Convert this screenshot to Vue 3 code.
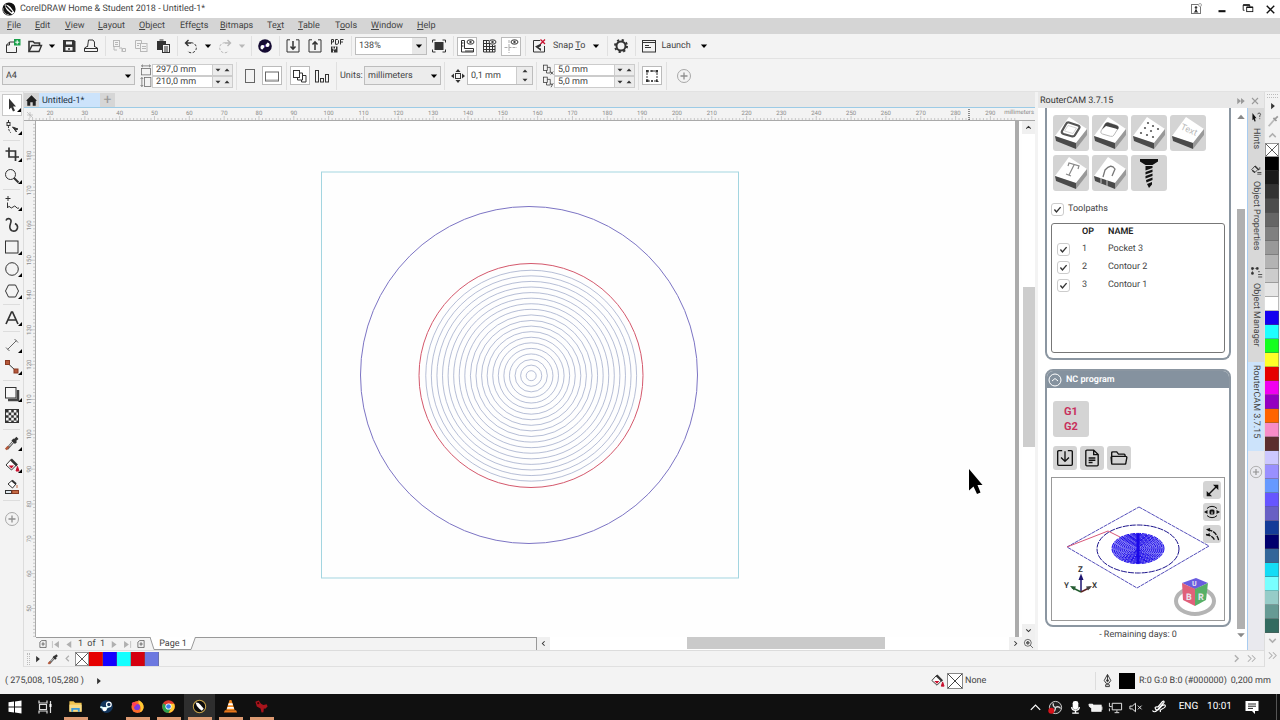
<script setup>
import { h, ref } from 'vue'

const glyphs = {
  corel: '<circle cx="8" cy="8" r="6.600" fill="#111" stroke="none"/><path d="M3.500 3.500 Q7 3 9.500 6 L13.500 11.500 L11 13.600 L7.800 10.800 Q4.500 8.500 3.500 3.500 Z" fill="#fff" stroke="none"/><path d="M4.600 4.500 L11 11" stroke="#111" stroke-width="1.500"/><path d="M2 7 A6 6 0 0 0 8 13.800" stroke="#999"/>',
  user: '<rect x="3.500" y="3.500" width="9" height="9" stroke="#777"/><circle cx="8" cy="6.500" r="1.300" fill="#333" stroke="none"/><path d="M5.500 11.500 H10.500 L9 10 V8.500 H7 V10 Z" fill="#333" stroke="none"/><circle cx="12" cy="4" r="1.500" fill="#fff" stroke="#aaa"/>',
  min: '<path d="M4 10.500 H12" stroke-width="2.400"/>',
  restore: '<rect x="6.500" y="6" width="7" height="5"/><path d="M4 9.500 H2.500 V3.500 H10 V5.500"/><path d="M6.500 6 H13.500 M2.500 3.500 H10" stroke-width="1.800"/>',
  close: '<path d="M4 4 L12 12 M12 4 L4 12" stroke-width="1.500"/>',
  newdoc: '<path d="M4.500 4 H9 M11.500 9 V14.500 H1.500 V7 L4.500 4 M4.500 4 V7 H1.500"/><rect x="9" y="1" width="6.500" height="6.500" fill="#19a04a" stroke="none"/><path d="M12.200 2.200 V6.300 M10.200 4.200 H14.300" stroke="#fff"/>',
  open: '<path d="M2 13.500 V3.500 H6 L7.500 5 H12.500 V7.500" stroke-width="1.600"/><path d="M2 13.500 L5 7.500 H14.500 L12 13.500 Z" stroke-width="1.400"/>',
  save: '<path d="M2 2 H13 L14.500 3.500 V14 H2 Z" fill="currentColor" stroke="none"/><rect x="5" y="3.500" width="6" height="3" fill="#f3f3f3" stroke="none"/><rect x="4.500" y="9" width="7" height="3.500" fill="#f3f3f3" stroke="none"/><path d="M8 10 V12" stroke-width="1.500"/>',
  print: '<path d="M4.500 9 L5.500 2 H10 L11.500 4 V9"/><path d="M1.500 13.500 V10 L4 8.500 M11.500 8.500 L14.500 10 V13.500 H1.500 M2 10.500 H14"/>',
  cut: '<rect x="2.500" y="2.500" width="6" height="6"/><path d="M4 4.500 H7 M4 6.500 H7 M8 10 H11 V14 M11.500 10.500 h3 v3 h-3z M3 9 V12 H6"/>',
  copy: '<path d="M7 10.500 H2.500 V2.500 H8.500 V5"/><rect x="7.500" y="5.500" width="6.500" height="8"/><path d="M4 5.500 H7 M4 7.500 H6 M9 8.500 H13 M9 10.500 H13"/>',
  paste: '<path d="M2 3 H11 V6 H7 V12 H2 Z" fill="currentColor" stroke="none"/><path d="M4.500 2 H8.500"/><rect x="7.500" y="6.500" width="7" height="8" fill="#f3f3f3"/><path d="M9 9 H13 M9 11 H13 M9 13 H13"/>',
  undo: '<path d="M5.500 2 L2.500 5 L5.500 8 M2.500 5 H8" stroke-width="1.400"/><path d="M8 4.800 A5 5 0 1 1 4.500 13" stroke-dasharray="2.500 1.500"/>',
  redo: '<path d="M10.500 2 L13.500 5 L10.500 8 M13.500 5 H8" stroke-width="1.400"/><path d="M8 4.800 A5 5 0 1 0 11.500 13" stroke-dasharray="2.500 1.500"/>',
  search: '<circle cx="8" cy="8" r="6.800" fill="#150b33" stroke="none"/><path d="M8 7 A2.300 2.300 0 1 0 10.500 4.500 L9 6.500 Z M8 9 A2.300 2.300 0 1 0 5.500 11.500 L7 9.500 Z" fill="#fff" stroke="none"/><circle cx="8" cy="8" r="1" fill="#5a35a8" stroke="none"/>',
  import: '<path d="M5 1.800 H2 V14 H14 V1.800 H11"/><path d="M8 3 V11 M5.500 8.500 L8 11.200 L10.500 8.500" stroke-width="1.500"/>',
  export: '<path d="M5 1.800 H2 V14 H14 V1.800 H11"/><path d="M8 12 V4 M5.500 6.500 L8 3.800 L10.500 6.500" stroke-width="1.500"/>',
  pdf: '<path d="M2.500 6.500 V1.500 H4.500 V4 H2.500 M6.500 1.500 V6.300 H8.500 L9.500 5 V2.500 L8.500 1.500 Z M11.500 6.500 V1.500 H14.500 M11.500 4 H14"/><path d="M2 8.500 H8.500 V14.500 H2 Z" fill="currentColor" stroke="none"/><path d="M4 8.500 V11 H6.500 V8.500 M4.500 14.500 V12.500" stroke="#f3f3f3"/>',
  full: '<rect x="3.500" y="4" width="9" height="8" fill="currentColor" stroke="none"/><path d="M1.500 4.500 V2 H4.500 M11.500 2 H14.500 V4.500 M14.500 11.500 V14 H11.500 M4.500 14 H1.500 V11.500"/>',
  rulers: '<path d="M2.500 2.500 H5.500 V10.500 H14.500 V14 H2.500 Z M3 5 H4.500 M3 8 H4.500 M7 12 V14 M9 12 V14 M11 12 V14 M13 12 V14"/><ellipse cx="11.500" cy="4" rx="3.500" ry="2.200"/><circle cx="11.500" cy="4" r=".8" fill="currentColor"/>',
  gridi: '<path d="M2.500 2.500 H8 M2.500 5.500 H8 M2.500 8.500 H14 M2.500 11.500 H14 M2.500 14 H14 M2.500 2 V14 M5.500 2 V14 M8.500 5 V14 M11.500 7 V14 M14 7 V14"/><ellipse cx="11.500" cy="4" rx="3.500" ry="2.200"/><circle cx="11.500" cy="4" r=".8" fill="currentColor"/>',
  guides: '<path d="M6 2 V15 M1.500 9.500 H14" stroke="#aaa" stroke-dasharray="3 1"/><ellipse cx="11.500" cy="4" rx="3.500" ry="2.200"/><circle cx="11.500" cy="4" r=".8" fill="currentColor"/>',
  snapoff: '<path d="M9 2.500 H2.500 V14 H13.500 V8"/><path d="M4 8.500 L10 5.500 V8 L7.500 9.500 L10 10.500 V13 Z" fill="currentColor" stroke="none"/><path d="M9.500 1.500 L14 6 M14 1.500 L9.500 6" stroke="#c8102e" stroke-width="1.300"/>',
  gear: '<circle cx="8" cy="8" r="4.500" stroke-width="2"/><circle cx="8" cy="8" r="6" stroke-width="2" stroke-dasharray="2.200 2.510"/>',
  launch: '<rect x="1.500" y="2.500" width="13" height="11.500"/><path d="M2 4.500 H14" /><path d="M4 7.500 H8 M4 9.500 H10"/>',
  portrait: '<rect x="3.500" y="1.500" width="9" height="13" stroke="#666"/>',
  landscape: '<rect x="1.500" y="4" width="13" height="9" stroke="#666"/><path d="M2 12 H14" stroke="#aaa"/>',
  pages: '<rect x="1.500" y="2.500" width="6" height="7"/><path d="M7.500 5 H10.500 V12 H5.500 V9.500"/><path d="M10.500 7.500 H14 V14 H9.500 V12"/>',
  bars: '<rect x="1.500" y="2.500" width="3" height="11.500"/><rect x="6.500" y="10.500" width="3" height="3.500"/><rect x="11.500" y="6.500" width="3" height="7.500"/>',
  nudge: '<rect x="5.500" y="5.500" width="5" height="5"/><path d="M8 1 L10.500 4 H5.500 Z M8 15 L10.500 12 H5.500 Z M1 8 L4 5.500 V10.500 Z M15 8 L12 5.500 V10.500 Z" fill="currentColor" stroke="none"/>',
  bbox: '<rect x="3" y="3" width="10" height="10" stroke-dasharray="2 1"/><path d="M2 2h2.500v2.500H2z M11.500 2H14v2.500h-2.500z M2 11.500h2.500V14H2z M12 11 L15 14 H12 Z M7 2.300h2v1.500H7z M7 12.300h2v1.500H7z" fill="currentColor" stroke="none"/>',
  plus: '<circle cx="8" cy="8" r="6.500" stroke="#a8a8a8"/><path d="M8 4.500 V11.500 M4.500 8 H11.500" stroke="#909090" stroke-width="1.300"/>',
  pageW: '<rect x="2" y="6" width="12" height="8.500" stroke="#666"/><path d="M2 2.500 H14 M4 .8 L2 2.500 L4 4.200 M12 .8 L14 2.500 L12 4.200" stroke="#666"/>',
  pageH: '<rect x="6" y="2" width="8.500" height="12" stroke="#666"/><path d="M2.500 2 V14 M.8 4 L2.500 2 L4.200 4 M.8 12 L2.500 14 L4.200 12" stroke="#666"/>',
  dup: '<rect x="2" y="1.500" width="5" height="7"/><path d="M7 4.500 H11 V12 H6 V8.500"/><path d="M11.500 10 L15 14 M15 10 L11.500 14"/>',
  dupY: '<rect x="2" y="1.500" width="5" height="7"/><path d="M7 4.500 H11 V12 H6 V8.500"/><path d="M11.500 9.500 L13.200 12 M15 9.500 L12 15"/>',
  home: '<path d="M8 1.500 L1.500 8 L2.800 9 V14.500 H6.500 V10 H9.500 V14.500 H13.200 V9 L14.500 8 Z" fill="#222" stroke="none"/>',
  pick: '<path d="M5 1.500 L12 9.500 H9 L11 13.500 L9 14.500 L7.200 10.500 L5 12.500 Z" fill="currentColor" stroke="none"/>',
  shape: '<path d="M4.500 1 V4 M4.500 6.500 Q4 11 7 14" stroke-dasharray="2.500 1"/><rect x="3" y="3.500" width="3" height="3" fill="#f3f3f3"/><path d="M8.500 8 L14 10 L11.500 11 L12.500 13 Z" fill="currentColor"/>',
  crop: '<path d="M5 1.500 V11 H15 M1.500 5 H11.500 V15 M1.500 5 H11" stroke-width="1.700"/>',
  zoomt: '<circle cx="6.500" cy="6.500" r="5"/><path d="M10 10 L14.500 14.500" stroke-width="2"/>',
  freehand: '<path d="M4 1 V6 M1.500 3.500 H6.500" /><path d="M3.500 7.500 V13 Q5 10 6 12 T9 12 T12 12 T15 13"/>',
  artistic: '<path d="M2 3.500 Q3 1 5.500 1.800 Q8 3 6.500 6.500 Q4.500 12 8 13.800 Q12.500 15 13.500 11 Q14 8 11 6.500" stroke-width="1.600"/>',
  rect: '<rect x="1.500" y="2" width="12.500" height="12"/>',
  ellipse: '<circle cx="8" cy="8" r="6.300"/>',
  polygon: '<path d="M4.500 2 H11.500 L14.500 8 L11.500 14 H4.500 L1.500 8 Z"/>',
  text: '<path d="M2 14 L7.500 2 H8.500 L14 14 M4.200 10 H11.800" stroke-width="1.700"/>',
  line: '<path d="M3.500 12.500 L12.500 3.500 M2 10.500 L5.500 14 M10.500 2 L14 5.500" stroke="#666"/>',
  connector: '<path d="M3.500 4 L12 12"/><rect x="1.500" y="1.500" width="4" height="4" fill="#b5583a" stroke="#8a3a22"/><rect x="10" y="10" width="4" height="4" fill="#b5583a" stroke="#8a3a22"/>',
  shadow: '<path d="M14 4 V14 H4" stroke="#444" stroke-width="2.500"/><rect x="1.500" y="1.500" width="10.500" height="10.500" fill="#f8f8f8"/>',
  checker: '<rect x="1.500" y="1.500" width="13" height="13"/><path d="M2 2h2.600v2.600H2z M7.200 2h2.600v2.600H7.200z M12.400 2H15v2.600h-2.600z M4.600 4.600h2.600v2.600H4.600z M9.800 4.600h2.600v2.600H9.800z M2 7.200h2.600v2.600H2z M7.200 7.200h2.600v2.600H7.200z M12.400 7.200h2.600v2.600h-2.600z M4.600 9.800h2.600v2.600H4.600z M9.800 9.800h2.600v2.600H9.800z M2 12.400h2.600V15H2z M7.200 12.400h2.600V15H7.200z M12.400 12.400H15V15h-2.600z" fill="currentColor" stroke="none"/>',
  dropper: '<path d="M3 14 L10 6" stroke="#555" stroke-width="2.600"/><path d="M5 11.500 L9.500 6.500" stroke="#eee"/><path d="M1.800 14.500 L4.500 11.500" stroke="#b5583a" stroke-width="2.500"/><path d="M8.500 4.500 L12 8 M10.500 5.500 L13.500 2.800" stroke-width="3"/>',
  dropgray: '<path d="M3 14 L10 6" stroke="#bbb" stroke-width="2"/><path d="M8.500 4.500 L12 8 M10.500 5.500 L13.500 2.800" stroke="#999" stroke-width="2"/>',
  bucket: '<path d="M2 8 L7 2.500 L12.500 8 L7.500 13 Z" fill="#fff"/><path d="M7 2.500 L13 8.500" stroke-width="2.500"/><path d="M4.500 8.500 H10 L7.500 11.500 Z" fill="#c8102e" stroke="none"/><path d="M13.500 9.500 L15 14 H12 Z" fill="#c8102e" stroke="#c8102e"/>',
  smart: '<path d="M4 5 L8 1.500 L12 5 L8.500 9 Z" fill="#fff"/><path d="M8 1.500 L12 5" stroke-width="2"/><path d="M13 6 V9" stroke="#c46a45"/><rect x="1.500" y="11.500" width="6" height="3" fill="#dfe8ee"/><rect x="8" y="11.500" width="6.500" height="3" fill="#c46a45" stroke="#8a3a22"/>',
  pen: '<path d="M8 1.500 L11.500 8 L9.500 11 H6.500 L4.500 8 Z M8 2 V7.500"/><circle cx="8" cy="8" r="1" fill="currentColor"/><path d="M6 12.500 H10 V14.500 H6 Z"/>',
  addpage: '<path d="M3 5 L6 2.500 H13 V13.500 H3 Z M8 5 V11 M5.500 8 H11"/>',
  first: '<path d="M3.500 3 V13"/><path d="M13 3 V13 L6 8 Z" fill="currentColor" stroke="none"/>',
  prev: '<path d="M12 3 V13 L5 8 Z" fill="currentColor" stroke="none"/>',
  next: '<path d="M4 3 V13 L11 8 Z" fill="currentColor" stroke="none"/>',
  last: '<path d="M3 3 V13 L10 8 Z" fill="currentColor" stroke="none"/><path d="M12.500 3 V13"/>',
  up: '<path d="M4 10 L8 6 L12 10" stroke-width="1.800"/>',
  down: '<path d="M4 6 L8 10 L12 6" stroke-width="1.800"/>',
  left: '<path d="M10 4 L6 8 L10 12" stroke-width="1.800"/>',
  right: '<path d="M6 4 L10 8 L6 12" stroke-width="1.800"/>',
  dright: '<path d="M3.500 4 L7.500 8 L3.500 12 M8.500 4 L12.500 8 L8.500 12" stroke-width="1.300"/>',
  ff: '<path d="M2 3 V13 L8 8 Z M8 3 V13 L14 8 Z" fill="currentColor" stroke="none"/>',
  tdown: '<path d="M3 5.500 H13 L8 11 Z" fill="currentColor" stroke="none"/>',
  tup: '<path d="M3 10.500 H13 L8 5 Z" fill="currentColor" stroke="none"/>',
  tright: '<path d="M5 3 V13 L11 8 Z" fill="currentColor" stroke="none"/>',
  zoomfit: '<circle cx="7" cy="7" r="5"/><circle cx="7" cy="7" r="1.800"/><path d="M10.500 10.500 L14.500 14.500 M7 4.500 V9.500 M4.500 7 H9.500"/>',
  xbox: '<rect x=".5" y=".5" width="15" height="15" fill="#fff" stroke="#888"/><path d="M1 1 L15 15 M15 1 L1 15" stroke="#444"/>',
  hint: '<path d="M3 2.500 L8 9 H6 L7 12.500 L5.500 13 L4.500 10 L3 11.500 Z" fill="#111" stroke="none"/><path d="M9.500 4 Q10 2 12 2.500 Q14 4 12 6 V7.500 M12 9 V10"/>',
  props: '<path d="M2 7 L6 2.500 L10 6.500 L6 10.500 Z"/><path d="M6 2.500 L11 7.500 M3 8 L6 10.500" stroke-width="1.800"/><path d="M9 10.500 H14 M9 12.500 H14 M12 4 V7"/>',
  manager: '<path d="M2 2h2v2H2z M8 2h2v2H8z M2 8h2v2H2z" fill="currentColor"/><path d="M4 3 H8 M3 4 V8" stroke-dasharray="1 1"/><path d="M10 10.500 H15 M10 13.500 H15 M10 7 H12"/>',
  check: '<path d="M3.500 8 L6.500 11.500 L12.500 4.500" stroke-width="2"/>',
  win: '<path d="M1.500 3.300 L7 2.500 V7.500 H1.500 Z M8 2.400 L14.500 1.500 V7.500 H8 Z M1.500 8.500 H7 V13.500 L1.500 12.700 Z M8 8.500 H14.500 V14.500 L8 13.600 Z" fill="#fff" stroke="none"/>',
  taskview: '<path d="M2 1.500 V4 H10 V1.500 M2 14.500 V12 H10 V14.500 M2.500 5.500 H9.500 V10.500 H2.500 Z M13.500 2 V14" stroke="#ddd" stroke-width="1.200"/><rect x="12.500" y="5" width="2" height="3" fill="#fff" stroke="none"/>',
  folder: '<path d="M1.500 2.500 H6 L7.500 4 H14.500 V13.500 H1.500 Z" fill="#f0c34e" stroke="none"/><path d="M1.500 6 H14.500 V13.500 H1.500 Z" fill="#f9dc86" stroke="none"/><path d="M3.500 13.500 V9.500 H12.500 V13.500 H10.500 V11.500 H5.500 V13.500 Z" fill="#3d9bd8" stroke="none"/>',
  steam: '<circle cx="8" cy="8" r="6.800" fill="#12355c" stroke="none"/><circle cx="10.500" cy="5.800" r="2.500" stroke="#fff" stroke-width="1.300"/><path d="M1.500 8.500 L6.500 10.500 L10 8" stroke="#dff" stroke-width="2"/><circle cx="6" cy="10.800" r="2.200" fill="#fff" stroke="none"/>',
  firefox: '<circle cx="8" cy="8.500" r="6.500" fill="#ff6a2b" stroke="none"/><path d="M9 1 Q15 4 14.500 9 Q14 13 10 14.500 Q13 10 10 6 Q8.500 4 9 1" fill="#ffc933" stroke="none"/><circle cx="7.500" cy="8.500" r="3.300" fill="#7a3be0" stroke="none"/><path d="M1.800 5 Q3 2 5 4 Q8 4 7 6 Q5 7 4.500 9" fill="#ff3d5a" stroke="none"/>',
  chrome: '<circle cx="8" cy="8" r="6.800" fill="#e33b2e" stroke="none"/><path d="M8 8 L2.100 4.600 A6.800 6.800 0 0 0 8 14.800 L11 9 Z" fill="#2ba24c" stroke="none"/><path d="M8 14.800 A6.800 6.800 0 0 0 14 5 H8 L11 9.500 Z" fill="#ffcd33" stroke="none"/><circle cx="8" cy="8" r="3.300" fill="#fff" stroke="none"/><circle cx="8" cy="8" r="2.500" fill="#3b7de8" stroke="none"/>',
  coreltask: '<circle cx="8" cy="8" r="6.600" fill="#0c0c0c" stroke="#c9a54c" stroke-width="1.100"/><path d="M3.800 3.800 Q7 3.500 9 6 L12.500 10.500 L10.500 12.500 L7.500 10 Q4.500 7.500 3.800 3.800 Z" fill="#fff" stroke="none"/>',
  vlc: '<path d="M7 1 H9 L12.500 12 H3.500 Z" fill="#f58a1f" stroke="none"/><path d="M6 4.500 H10 L10.700 6.700 H5.300 Z M4.800 8.500 H11.200 L11.900 10.500 H4.100 Z" fill="#fff" stroke="none"/><path d="M2 12 H14 L15 14.500 H1 Z" fill="#e9771a" stroke="none"/>',
  red: '<path d="M1.500 3 L5 1.500 L7.500 5 L10 6.500 L13.500 5.500 L14.500 8 L12 10.500 L10.500 10 L10 14 L8 14.500 L7 10 L3 8 Z" fill="#a8141c" stroke="none"/><circle cx="4.500" cy="4.500" r="1.200" fill="#400" stroke="none"/>',
  obs: '<circle cx="8" cy="8" r="6.500" stroke="#ddd" fill="#222"/><path d="M8 8 Q5 7 5.500 3.500 M8 8 Q11 6 13.500 9 M8 8 Q8 11.500 5 13" stroke="#ddd" stroke-width="1.300"/><circle cx="3.500" cy="11.500" r="3.200" fill="#d8121a" stroke="none"/>',
  mic: '<rect x="5" y="1" width="6" height="9" rx="2.500" fill="#fff" stroke="none"/><path d="M4 7.500 Q4 11 8 11 Q12 11 12 7.500 M8 10 V14 M4.500 14 H11.500" stroke="#fff" stroke-width="1.500"/>',
  battery: '<rect x="4" y="5.500" width="10" height="6.500" fill="#eee" stroke="#fff"/><path d="M14.800 7 V10.500 M1 4.500 H5 V7 Q3 9 1.500 7 Z" stroke="#fff" fill="#eee"/>',
  display: '<path d="M4.500 3.500 H14.500 V10.500 H4.500 Z M7 13.500 H12 M9.500 11 V13 M1.500 3 V7 H4 M1.500 9 V12" stroke="#eee"/>',
  mute: '<path d="M2 6.500 H4.500 L8 3.500 V12.500 L4.500 9.500 H2 Z M10.500 6 L14.500 10 M14.500 6 L10.500 10" stroke="#eee"/>',
  ink: '<path d="M1.500 11.500 Q3 14 6 11.500 L13 3.500 Q13.500 1.500 11.500 2.500 L7 8 M7 8 Q3 7.500 4.500 10 Q7 12.500 9 9 Q11 5.500 14 6 Q15.500 8 11 10 Q8.500 11 9.500 13" stroke="#fff" stroke-width="1.200"/>',
  notif: '<path d="M1.500 2 H14.500 V12 H11 V15 L8 12 H1.500 Z" fill="#fff" stroke="none"/><path d="M4 5 H12 M4 7.200 H12 M4 9.400 H9" stroke="#222"/>',
  trayup: '<path d="M3 10.500 L8 5.500 L13 10.500" stroke="#fff" stroke-width="1.300"/>',
  dl: '<path d="M5.500 1.500 H2.500 Q1.500 1.500 1.500 2.500 V13.500 Q1.500 14.500 2.500 14.500 H13.500 Q14.500 14.500 14.500 13.500 V2.500 Q14.500 1.500 13.500 1.500 H10.500 M8 2 V10.500 M4.500 7.500 L8 11 L11.500 7.500" stroke-width="1.200"/>',
  file: '<path d="M9.500 1 H3.500 Q2.500 1 2.500 2 V14 Q2.500 15 3.500 15 H12.500 Q13.500 15 13.500 14 V5 Z M9.500 1 V5 H13.500" stroke-width="1.200"/><path d="M5 8 H11 M5 10 H11 M5 12 H8.500" stroke-width="1.200"/>',
  dir: '<path d="M1.500 13 V3.500 Q1.500 2.500 2.500 2.500 H6 L7.500 4.500 H12.500 Q13.500 4.500 13.500 6.500 M1.500 13 L1 7.500 Q1 6.500 2 6.500 H14 Q15 6.500 15 7.500 L14 13 Q13.800 13.500 13 13.500 H2.500 Q1.500 13.500 1.500 13" stroke-width="1.200"/>',
  diag: '<path d="M3.500 12.500 L12.500 3.500" stroke-width="1.500"/><path d="M8.500 1.800 H14.200 V7.500 Z M1.800 8.500 V14.200 H7.500 Z" fill="currentColor" stroke="none"/>',
  orbit: '<path d="M3 4.500 A6.500 6 0 0 1 13 4.500 M3 11.500 A6.500 6 0 0 0 13 11.500"/><path d="M0 8 L3.500 6 V10 Z M16 8 L12.500 6 V10 Z" fill="currentColor" stroke="none"/><rect x="5.500" y="5.500" width="5" height="5" rx="1.500" fill="currentColor" stroke="none"/><path d="M8 7.500 V10" stroke="#ddd"/>',
  arcs: '<path d="M3 3 Q12 4 14.500 14 M1 8 Q8 8.500 10.500 14.500" stroke-width="1.400" stroke-dasharray="5 1"/><path d="M1 2.500 L5.500 1 L5 5 Z M1 8.500 L5 6.500 L5 10 Z" fill="currentColor" stroke="none"/>'
}
const Ic = (p) => h('svg', { class: 'ic', viewBox: '0 0 16 16', width: p.s || 16, height: p.s || 16, 'aria-hidden': 'true', innerHTML: glyphs[p.n] })
Ic.props = ['n', 's']

const slab = '<path d="M2 21 L16 2 L34 14 L23 28 Z" fill="#fff"/><path d="M2 21 L23 28 V34 L3 26 Z" fill="#4a4a4a"/><path d="M23 28 L34 14 V20 L23 34 Z" fill="#999"/>'
const ops = [
  { label: 'Contour', art: slab + '<path d="M9 16 L13 9 Q14 7 16 7.500 L25 10.500 Q27.500 11.500 26 13.500 L22 20 Q21 22 18.500 21.300 L10.500 19 Q8 18 9 16 Z" fill="none" stroke="#555" stroke-width="2.200"/><path d="M11.500 16 L15 10.500 L23.500 13 L20 18.500 Z" fill="none" stroke="#ccc" stroke-width=".8"/>' },
  { label: 'Pocket', art: slab + '<path d="M9 16 L13 9 Q14 7 16 7.500 L25 10.500 Q27.500 11.500 26 13.500 L22 20 Q21 22 18.500 21.300 L10.500 19 Q8 18 9 16 Z" fill="#fff" stroke="#bbb"/><path d="M10 14.500 L13 9 Q14 7 16 7.500 L25 10.500 Q27.500 11.500 26 14.500 L23.500 13.500 L14 11 Z" fill="#444"/>' },
  { label: 'Drilling', art: slab + '<g fill="#555"><circle cx="17" cy="8" r="1.100"/><circle cx="22" cy="11" r="1.100"/><circle cx="27" cy="14" r="1.100"/><circle cx="10" cy="18" r="1.100"/><circle cx="14" cy="13" r="1.100"/><circle cx="16" cy="20" r="1.100"/><circle cx="20" cy="16" r="1.100"/><circle cx="22" cy="22" r="1.100"/></g>' },
  { label: 'Text engraving', art: slab, word: 'Text' },
  { label: 'V-carving', art: slab + '<path d="M15 11 L16 8 L26 11 L25 14 M21 10 L16 20 M13 19 L18 21" fill="none" stroke="#888" stroke-width="1.200"/>' },
  { label: '3D milling', art: slab + '<path d="M11 22 L13 15 Q19 8 23 14 L20 21" fill="none" stroke="#777" stroke-width="1.300"/><path d="M9 23 V28 M15 25 V31" stroke="#ccc"/>' },
  { label: 'Thread', art: '<path d="M9 4 H27 V6.500 L21.500 10 H14.500 L9 6.500 Z M14.500 11 H21.500 V13 L14.500 15.500 Z M14.500 17 L21.500 14.500 V17 L14.500 19.500 Z M14.500 21 L21.500 18.500 V21 L14.500 23.500 Z M15 25 L21.500 22.500 V25 L15.500 27.500 Z M16 29 L21 27 V29.500 L18 33 Z" fill="#111"/>' }
]

const menus = [['F', 'ile'], ['E', 'dit'], ['V', 'iew'], ['L', 'ayout'], ['O', 'bject'], ['', 'Effe', 'c', 'ts'], ['B', 'itmaps'], ['', 'Te', 'x', 't'], ['T', 'able'], ['', 'T', 'o', 'ols'], ['W', 'indow'], ['H', 'elp']]

const barA = [
  { n: 'newdoc', l: 'New' }, { n: 'open', l: 'Open' }, { n: 'tdown', l: 'Open recent', k: 'dd' }, { n: 'save', l: 'Save' }, { n: 'print', l: 'Print' }, { k: 'sep' },
  { n: 'cut', l: 'Cut', off: 1 }, { n: 'copy', l: 'Copy', off: 1 }, { n: 'paste', l: 'Paste' }, { k: 'sep' },
  { n: 'undo', l: 'Undo' }, { n: 'tdown', l: 'Undo list', k: 'dd' }, { n: 'redo', l: 'Redo', off: 1 }, { n: 'tdown', l: 'Redo list', k: 'dd', off: 1 }, { k: 'sep' },
  { n: 'search', l: 'Search content' }, { k: 'sep' }, { n: 'import', l: 'Import' }, { n: 'export', l: 'Export' }, { n: 'pdf', l: 'Publish to PDF' }, { k: 'sep' }
]
const tools = ['pick', 'shape', '', 'crop', 'zoomt', '', 'freehand', 'artistic', 'rect', 'ellipse', 'polygon', '', 'text', '', 'line', 'connector', '', 'shadow', 'checker', '', 'dropper', 'bucket', 'smart', '', 'plus']
const noFlyout = ['artistic', 'checker', 'smart', 'plus']

const palette = ['#000000', '#1a1a1a', '#333333', '#4d4d4d', '#666666', '#808080', '#999999', '#b3b3b3', '#cccccc', '#e6e6e6', '#ffffff', '#1400f0', '#1effff', '#14ff1e', '#ffff28', '#e60000', '#f000f0', '#9400c0', '#ff6400', '#f78cc8', '#5c2e2e', '#ccc8ff', '#9990ff', '#6699ff', '#6655ff', '#6860c4', '#143c98', '#00006e', '#336699', '#14dcf5', '#78ffff', '#96ccc8', '#669a94', '#336b60']
const docColors = ['#e60000', '#1400ff', '#14ffff', '#d4000f', '#6c78e0']

const step = 3.483
const hx = (mm) => 26 + (mm - 20) * step
const vy = (mm) => 34.7 + (180 - mm) * step
const hTicks = Array.from({ length: 284 }, (_, i) => i + 14)
const hLabels = Array.from({ length: 28 }, (_, i) => (i + 2) * 10)
const vTicks = Array.from({ length: 150 }, (_, i) => i + 40)
const vLabels = Array.from({ length: 14 }, (_, i) => (i + 5) * 10)
const rings = Array.from({ length: 19 }, (_, i) => 5 + i * 5.58)
const miniRings = Array.from({ length: 13 }, (_, i) => 2 + i * 2)

const showPaths = ref(true)
const rows = ref([
  { on: true, op: 1, name: 'Pocket 3' },
  { on: true, op: 2, name: 'Contour 2' },
  { on: true, op: 3, name: 'Contour 1' }
])
const apps = [{ n: 'folder', r: 1 }, { n: 'steam' }, { n: 'firefox', r: 1 }, { n: 'chrome', r: 1 }, { n: 'coreltask', r: 1, a: 1 }, { n: 'vlc', r: 1 }, { n: 'red', r: 1 }]
const tray = ['trayup', 'obs', 'mic', 'battery', 'display', 'mute']
</script>

<template>
  <div class="app">
    <header class="title">
      <Ic n="corel" />
      <span>CorelDRAW Home &amp; Student 2018 - Untitled-1*</span>
      <div class="winbtns">
        <button aria-label="Account"><Ic n="user" /></button>
        <button aria-label="Minimize"><Ic n="min" s="14" /></button>
        <button aria-label="Restore"><Ic n="restore" s="14" /></button>
        <button aria-label="Close"><Ic n="close" s="15" /></button>
      </div>
    </header>

    <nav class="menu">
      <button v-for="(m, i) in menus" :key="i"><u v-if="m[0]">{{ m[0] }}</u>{{ m[1] }}<u v-if="m[2]">{{ m[2] }}</u>{{ m[3] }}</button>
    </nav>

    <div class="bar">
      <template v-for="(b, i) in barA" :key="i">
        <i v-if="b.k === 'sep'" class="sep"></i>
        <button v-else class="tb" :class="{ dd: b.k === 'dd', off: b.off }" :aria-label="b.l"><Ic :n="b.n" :s="b.k === 'dd' ? 10 : 16" /></button>
      </template>
      <div class="field zoomf">
        <input aria-label="Zoom level" value="138%" />
        <button aria-label="Zoom levels"><Ic n="tdown" s="10" /></button>
      </div>
      <button class="tb" aria-label="Full-screen preview"><Ic n="full" /></button>
      <i class="sep"></i>
      <button class="tb on" aria-label="Show rulers"><Ic n="rulers" /></button>
      <button class="tb" aria-label="Show grid"><Ic n="gridi" /></button>
      <button class="tb on" aria-label="Show guidelines"><Ic n="guides" /></button>
      <i class="sep"></i>
      <button class="tb" aria-label="Snap off"><Ic n="snapoff" /></button>
      <button class="txt snap"><span>Snap <u>T</u>o</span><Ic n="tdown" s="10" /></button>
      <i class="sep"></i>
      <button class="tb" aria-label="Options"><Ic n="gear" /></button>
      <i class="sep"></i>
      <button class="txt launch"><Ic n="launch" /><span>Launch</span><Ic n="tdown" s="10" class="last" /></button>
    </div>

    <div class="bar prop">
      <div class="field sel size"><select aria-label="Page size"><option>A4</option></select><Ic n="tdown" s="10" /></div>
      <div class="pair">
        <Ic n="pageW" s="12" /><input aria-label="Page width" value="297,0 mm" /><span class="spin"><button aria-label="Decrease width"><Ic n="tdown" s="8" /></button><button aria-label="Increase width"><Ic n="tup" s="8" /></button></span>
        <Ic n="pageH" s="12" /><input aria-label="Page height" value="210,0 mm" /><span class="spin"><button aria-label="Decrease height"><Ic n="tdown" s="8" /></button><button aria-label="Increase height"><Ic n="tup" s="8" /></button></span>
      </div>
      <i class="sep"></i>
      <button class="tb" aria-label="Portrait"><Ic n="portrait" /></button>
      <button class="tb on" aria-label="Landscape"><Ic n="landscape" /></button>
      <i class="sep"></i>
      <button class="tb on" aria-label="All pages"><Ic n="pages" /></button>
      <button class="tb" aria-label="Current page"><Ic n="bars" /></button>
      <i class="sep"></i>
      <label class="units" for="units">Units:</label>
      <div class="field sel unitsel"><select id="units"><option>millimeters</option></select><Ic n="tdown" s="10" /></div>
      <i class="sep"></i>
      <Ic n="nudge" class="nudge" />
      <div class="field nud">
        <input aria-label="Nudge distance" value="0,1 mm" />
        <span class="vspin"><button aria-label="Increase nudge"><Ic n="tup" s="8" /></button><button aria-label="Decrease nudge"><Ic n="tdown" s="8" /></button></span>
      </div>
      <i class="sep"></i>
      <div class="pair dups">
        <Ic n="dup" s="12" /><input aria-label="Duplicate distance X" value="5,0 mm" /><span class="spin"><button aria-label="Decrease X"><Ic n="tdown" s="8" /></button><button aria-label="Increase X"><Ic n="tup" s="8" /></button></span>
        <Ic n="dupY" s="12" /><input aria-label="Duplicate distance Y" value="5,0 mm" /><span class="spin"><button aria-label="Decrease Y"><Ic n="tdown" s="8" /></button><button aria-label="Increase Y"><Ic n="tup" s="8" /></button></span>
      </div>
      <i class="sep"></i>
      <button class="tb on" aria-label="Treat as filled"><Ic n="bbox" /></button>
      <i class="sep"></i>
      <button class="tb addc" aria-label="Customize"><Ic n="plus" /></button>
    </div>

    <main class="main">
      <aside class="toolbox">
        <template v-for="(t, i) in tools" :key="i">
          <i v-if="!t" class="hsep"></i>
          <button v-else :class="{ on: t === 'pick', fly: !noFlyout.includes(t), more: t === 'plus' }" :aria-label="t"><Ic :n="t" /></button>
        </template>
      </aside>

      <div class="center">
        <div class="upper">
          <section class="doc">
            <div class="tabs">
              <button class="home" aria-label="Welcome screen"><Ic n="home" s="13" /></button>
              <button class="tab">Untitled-1*</button>
              <button class="add" aria-label="New tab">+</button>
            </div>
            <div class="hruler">
              <svg width="100%" height="13">
                <path d="M3 4 L9 10 M3 7 H9 M6 4 V10" class="tick" />
                <line v-for="t in hTicks" :key="t" :x1="hx(t)" :x2="hx(t)" :y1="t % 10 ? 10 : 8" y2="12" class="tick" />
                <line x1="945" x2="945" y1="1" y2="12" stroke="#222" stroke-dasharray="1 1" />
                <text v-for="l in hLabels" :key="l" :x="hx(l)" y="7" text-anchor="middle" class="rl">{{ l }}</text>
              </svg>
              <span>millimeters</span>
            </div>
            <div class="row">
              <div class="vruler">
                <svg width="12" height="100%">
                  <line v-for="t in vTicks" :key="t" :y1="vy(t)" :y2="vy(t)" :x1="t % 10 ? 9 : 7" x2="11" class="tick" />
                  <text v-for="l in vLabels" :key="l" :transform="`translate(7 ${vy(l)}) rotate(-90)`" text-anchor="middle" class="rl">{{ l }}</text>
                </svg>
              </div>
              <div class="canvas">
                <svg width="100%" height="100%" fill="none">
                  <rect x="285.500" y="51" width="417" height="406" stroke="#a3d5e0" />
                  <circle cx="493" cy="254" r="168.500" stroke="#7c74c4" />
                  <circle cx="495" cy="254.500" r="112" stroke="#d4586c" />
                  <circle v-for="r in rings" :key="r" cx="495.200" cy="254.700" :r="r" stroke="#97a2c4" stroke-width=".7" />
                </svg>
                <svg class="cursor" width="16" height="30" viewBox="0 0 16 30"><path d="M1 1 V22.500 L5.500 18.500 L9 26 L12.500 24.500 L9.500 17 H14.500 Z" fill="#000" /></svg>
              </div>
              <div class="vscroll">
                <button aria-label="Scroll up"><Ic n="up" s="9" /></button>
                <span class="thumb"></span>
                <button aria-label="Scroll down"><Ic n="down" s="9" /></button>
              </div>
            </div>
            <div class="pagenav">
              <div class="nav">
                <button aria-label="Add page before"><Ic n="addpage" s="10" /></button>
                <button class="g" aria-label="First page"><Ic n="first" s="11" /></button>
                <button class="g" aria-label="Previous page"><Ic n="prev" s="11" /></button>
                <span>1</span><span>of</span><span>1</span>
                <button class="g" aria-label="Next page"><Ic n="next" s="11" /></button>
                <button class="g" aria-label="Last page"><Ic n="last" s="11" /></button>
                <button aria-label="Add page after"><Ic n="addpage" s="10" /></button>
                <button class="ptab">
                  <svg width="46" height="13" viewBox="0 0 46 13"><path d="M0 0 L4 12.500 H41 L45.500 0" fill="#fff" stroke="#999" /></svg>
                  <span>Page 1</span>
                </button>
              </div>
              <button class="sb" aria-label="Scroll left"><Ic n="left" s="9" /></button>
              <div class="track"><span></span></div>
              <button class="sb" aria-label="Scroll right"><Ic n="right" s="9" /></button>
              <button class="sb zf" aria-label="Navigator"><Ic n="zoomfit" s="11" /></button>
            </div>
          </section>

          <section class="docker">
            <div class="dhead">
              <span>RouterCAM 3.7.15</span>
              <button aria-label="Collapse docker"><Ic n="ff" s="10" /></button>
              <button aria-label="Close docker"><Ic n="close" s="12" /></button>
            </div>
            <div class="dbody">
              <div class="dcontent">
                <div class="group first">
                  <div class="ops">
                    <button v-for="o in ops" :key="o.label" :aria-label="o.label">
                      <svg width="36" height="36" viewBox="0 0 36 36"><g v-html="o.art"></g><text v-if="o.word" x="10" y="14" transform="rotate(24 10 14)" class="eng">{{ o.word }}</text></svg>
                    </button>
                  </div>
                  <label class="tp"><span class="cb"><input v-model="showPaths" type="checkbox" /><Ic v-if="showPaths" n="check" s="11" /></span>Toolpaths</label>
                  <div class="list">
                    <table>
                      <thead><tr><th></th><th>OP</th><th>NAME</th></tr></thead>
                      <tbody>
                        <tr v-for="r in rows" :key="r.op">
                          <td><span class="cb"><input v-model="r.on" type="checkbox" :aria-label="r.name" /><Ic v-if="r.on" n="check" s="11" /></span></td>
                          <td>{{ r.op }}</td><td>{{ r.name }}</td>
                        </tr>
                      </tbody>
                    </table>
                  </div>
                </div>
                <div class="group nc">
                  <button class="nchead"><svg width="14" height="14" viewBox="0 0 14 14" fill="none" stroke="#fff"><circle cx="7" cy="7" r="6" /><path d="M4 8 L7 5.500 L10 8" /></svg>NC program</button>
                  <div class="ncbody">
                    <button class="g12">G1<br />G2</button>
                    <div class="files">
                      <button aria-label="Save program"><Ic n="dl" s="18" /></button>
                      <button aria-label="Open program"><Ic n="file" s="18" /></button>
                      <button aria-label="Program folder"><Ic n="dir" s="18" /></button>
                    </div>
                    <div class="preview">
                      <svg width="172" height="142" viewBox="1052 478 172 142" fill="none">
                        <path d="M1139 507 L1209 546 L1137 588 L1067 547 Z" stroke="#2a22a8" stroke-width=".8" stroke-dasharray="4 .7" />
                        <ellipse cx="1138" cy="549" rx="41" ry="24" stroke="#1c148c" stroke-dasharray="6 1" />
                        <ellipse cx="1138" cy="548.500" rx="26" ry="15" fill="#8a84f4" />
                        <ellipse v-for="m in miniRings" :key="m" cx="1138" cy="548.500" :rx="m" :ry="m * 0.58" stroke="#1a08e8" stroke-dasharray="5 1" />
                        <path d="M1138 534 V563" stroke="#1a08e8" stroke-width="3" />
                        <path d="M1067 547 L1108 531 L1120 537" stroke="#d8587a" />
                        <path d="M1081 592 V579" stroke="#1c1470" stroke-width="1.500" /><path d="M1081 573.500 L1083.500 580 H1078.500 Z" fill="#1c1470" />
                        <path d="M1081 592 L1072 587.500" stroke="#245c30" stroke-width="1.500" /><path d="M1070 586 L1076 586.500 L1074 590.500 Z" fill="#245c30" />
                        <path d="M1081 592 L1090 587.500" stroke="#5c2424" stroke-width="1.500" /><path d="M1092 586 L1086 586.500 L1088 590.500 Z" fill="#444" />
                        <text x="1078" y="572" class="ax">Z</text><text x="1064" y="588" class="ax">Y</text><text x="1092" y="588" class="ax">X</text>
                        <ellipse cx="1195" cy="601" rx="19" ry="13" stroke="#b4b4b4" stroke-width="4" />
                        <path d="M1182 583 L1196 578 L1208 583 L1195 589 Z" fill="#6a5ce0" />
                        <path d="M1182 583 L1195 589 V606 L1183 600 Z" fill="#e0607a" />
                        <path d="M1195 589 L1208 583 L1206 600 L1195 606 Z" fill="#58b068" />
                        <text x="1186" y="600" class="cube">B</text><text x="1198" y="600" class="cube">R</text><text x="1192" y="586" class="cube sm">U</text>
                      </svg>
                      <div class="pbtns">
                        <button aria-label="Fit view"><Ic n="diag" s="15" /></button>
                        <button aria-label="Rotate view"><Ic n="orbit" s="16" /></button>
                        <button aria-label="Show toolpath"><Ic n="arcs" s="15" /></button>
                      </div>
                    </div>
                  </div>
                </div>
                <p class="days">- Remaining days: 0</p>
              </div>
              <div class="dscroll"><Ic n="tup" s="12" /><span></span><Ic n="tdown" s="12" /></div>
              <div class="dtabs">
                <button class="hints"><Ic n="hint" s="13" />Hints</button>
                <button class="props"><Ic n="props" s="13" />Object Properties</button>
                <button class="manager"><Ic n="manager" s="13" />Object Manager</button>
                <button class="act">RouterCAM 3.7.15</button>
                <button class="plus" aria-label="Add docker"><Ic n="plus" s="14" /></button>
              </div>
            </div>
          </section>
        </div>

        <div class="docpal">
          <i class="grip"></i>
          <button aria-label="Palette menu"><Ic n="tright" s="10" /></button>
          <button aria-label="Sample color"><Ic n="dropper" s="12" /></button>
          <button class="g" aria-label="Scroll palette left"><Ic n="left" s="11" /></button>
          <button class="sw" aria-label="No color"><Ic n="xbox" s="14" /></button>
          <button v-for="c in docColors" :key="c" class="sw" :style="{ background: c }" :aria-label="c"></button>
          <button class="g end" aria-label="Scroll palette right"><Ic n="right" s="13" /></button>
          <button class="g" aria-label="Expand palette"><Ic n="dright" s="13" /></button>
        </div>
      </div>

      <aside class="palette">
        <i class="dots"></i>
        <button class="pa" aria-label="Palette flyout"><Ic n="tright" s="10" /></button>
        <button class="pa" aria-label="Eyedropper"><Ic n="dropgray" s="14" /></button>
        <button class="pa g" aria-label="Scroll up"><Ic n="up" s="13" /></button>
        <button class="sw" aria-label="No color"><Ic n="xbox" s="14" /></button>
        <button v-for="c in palette" :key="c" class="sw" :style="{ background: c }" :aria-label="c"></button>
        <button class="pa g" aria-label="Scroll down"><Ic n="down" s="13" /></button>
        <button class="pa g" aria-label="Expand"><Ic n="dright" s="13" /></button>
      </aside>
    </main>

    <footer class="status">
      <span class="coords">( 275,008, 105,280 )</span>
      <button aria-label="Status menu"><Ic n="tright" s="10" /></button>
      <div class="fill"><Ic n="bucket" s="15" /><Ic n="xbox" s="16" /><span>None</span></div>
      <div class="outline"><Ic n="pen" s="15" /><b></b><span>R:0 G:0 B:0 (#000000)</span><span>0,200 mm</span></div>
    </footer>

    <footer class="taskbar">
      <button class="start" aria-label="Start"><Ic n="win" /></button>
      <button class="tv" aria-label="Task view"><Ic n="taskview" /></button>
      <button v-for="a in apps" :key="a.n" class="appb" :class="{ run: a.r, act: a.a }" :aria-label="a.n"><Ic :n="a.n" s="15" /></button>
      <div class="tray">
        <button v-for="t in tray" :key="t" :aria-label="t"><Ic :n="t" s="15" /></button>
        <button class="ink" aria-label="Ink workspace"><Ic n="ink" /></button>
        <span class="lang">ENG</span><span class="clock">10:01</span>
        <button class="notif" aria-label="Notifications"><Ic n="notif" /></button>
      </div>
    </footer>
  </div>
</template>

<style>
body { margin: 0; background: #f3f3f3; }
</style>

<style scoped>
.app { display: flex; flex-direction: column; min-height: 100vh; font: 9px/12px Roboto, "Noto Sans", sans-serif; color: #444; background: #f3f3f3; text-rendering: geometricPrecision; }
.app * { box-sizing: border-box; }
button, input, select { font: inherit; color: inherit; text-rendering: inherit; margin: 0; padding: 0; border: 0; background: none; border-radius: 0; }
button { display: flex; align-items: center; justify-content: center; flex: none; }
.ic { display: block; flex: none; fill: none; stroke: currentColor; color: #333; stroke-width: 1; }
.title { height: 18px; background: #fff; display: flex; align-items: center; gap: 3px; padding-left: 1px; }
.winbtns { display: flex; margin-left: auto; }
.winbtns button { width: 26px; height: 18px; }
.winbtns button:last-child { width: 19px; }
.winbtns .ic { color: #111; }
.menu { height: 16px; background: #d5d5d5; display: grid; grid-template-columns: 28px 30px 33px 41px 41px 40px 47px 31px 37px 36px 46px 40px; padding-left: 7px; }
.menu button { display: block; text-align: left; height: 16px; white-space: nowrap; }
.bar { height: 25px; display: flex; align-items: center; padding-left: 2px; border-bottom: 1px solid #e2e2e2; }
.sep { width: 1px; height: 20px; background: #e0e0e0; margin: 0 2px 0 3px; flex: none; }
.tb { width: 22px; height: 20px; }
.tb.dd { width: 12px; }
.dd .ic, .snap .ic, .launch .last, .sel .ic, .zoomf .ic { color: #000; }
.off .ic { color: #b8b8b8; }
.tb.on { width: 20px; height: 19px; margin: 0 1px; background: #fff; border: 1px solid #bbb; }
.field { display: flex; align-items: center; border: 1px solid #bdbdbd; height: 19px; background: #fff; flex: none; }
.field input { width: 100%; min-width: 0; padding-left: 3px; }
.zoomf { width: 72px; height: 18px; margin: 0 1px; }
.zoomf button { width: 14px; height: 16px; background: #e8e8e8; }
.txt { height: 20px; white-space: nowrap; }
.snap { gap: 6px; padding: 0 3px; }
.launch { gap: 4px; padding: 0 3px; }
.launch .last { margin-left: 4px; }
.prop { height: 33px; padding: 1px 0 0 2px; }
.prop .sep { height: 28px; }
.sel { position: relative; background: #ececec; }
.sel select { appearance: none; width: 100%; height: 17px; padding-left: 3px; outline: 0; }
.sel .ic { position: absolute; right: 1px; pointer-events: none; }
.size { width: 133px; margin-right: 5px; }
.pair { display: grid; grid-template-columns: 12px 61px 20px; grid-auto-rows: 12px; align-items: center; }
.dups { margin-left: 3px; }
.pair input { height: 12px; border: 1px solid #ccc; background: #fff; padding-left: 3px; width: 61px; }
.spin { display: flex; height: 12px; background: #ececec; border: 1px solid #ccc; border-left: 0; }
.spin button { flex: 1; }
.units { margin-left: 1px; width: 24px; white-space: nowrap; }
.unitsel { width: 77px; }
.nudge { margin: 0 1px 0 3px; }
.nud { width: 66px; }
.vspin { height: 17px; width: 16px; flex: none; background: #ececec; border-left: 1px solid #ccc; display: flex; flex-direction: column; }
.vspin button { flex: 1; width: 100%; }
.addc { margin-left: 4px; }

.main { flex: 1; display: flex; min-height: 0; }
.toolbox { width: 24px; padding-top: 2px; border-right: 1px solid #dcdcdc; flex: none; }
.toolbox button { width: 20px; height: 22px; margin-left: 2px; position: relative; }
.toolbox button.on { background: #fff; border: 1px solid #c8c8c8; }
.toolbox button.more { margin-top: 7px; }
.toolbox .fly::after { content: ""; position: absolute; right: 0; bottom: 3px; border-left: 4px solid transparent; border-bottom: 4px solid #000; }
.hsep { display: block; height: 1px; margin: 2px 3px; background: #ddd; }
.center { flex: 1; min-width: 0; display: flex; flex-direction: column; }
.upper { flex: 1; display: flex; gap: 3px; min-height: 0; }
.doc { flex: 1; min-width: 0; display: flex; flex-direction: column; }
.tabs { height: 16px; background: #e8e8e8; border-bottom: 1px solid #9ccbe6; display: flex; padding-top: 1px; }
.tabs .home { width: 15px; background: #d5d5d5; }
.tab { width: 61px; background: #cce3fb; color: #234; justify-content: flex-start; padding: 1px 0 0 3px; }
.add { width: 15px; background: #d6d6d6; color: #999; font-size: 14px; }
.hruler { height: 13px; position: relative; border-bottom: 1px solid #aaa; }
.hruler svg, .vruler svg { display: block; }
.hruler span { position: absolute; right: 1px; top: 0; font-size: 6px; line-height: 9px; color: #888; }
.tick { stroke: #b5b5b5; stroke-width: .7; fill: none; }
.rl { font-size: 6px; fill: #8c8c8c; }
.row { flex: 1; display: flex; min-height: 0; }
.vruler { width: 12px; border-right: 1px solid #aaa; overflow: hidden; flex: none; }
.canvas { flex: 1; min-width: 0; background: #fefefe; position: relative; border-right: 3px solid #fefefe; }
.canvas::after { content: ""; position: absolute; right: 0; top: 0; bottom: 0; width: 4px; background: #ababab; }
.canvas > svg:first-child { display: block; position: absolute; inset: 0; }
.cursor { position: absolute; left: 932px; top: 347px; }
.vscroll { width: 13px; display: flex; flex-direction: column; background: #fff; }
.vscroll button { height: 13px; background: #f0f0f0; width: 13px; }
.vscroll .thumb { height: 160px; margin: 153px 0 auto 1px; background: #cdcdcd; width: 12px; }
.pagenav { height: 13px; display: flex; }
.nav { width: 501px; margin-left: 12px; border-top: 1px solid #999; border-right: 1px solid #999; display: flex; align-items: center; }
.nav button { width: 13px; height: 12px; }
.nav .g .ic, .g .ic { color: #b0b0b0; }
.nav > span { width: 11px; text-align: center; }
.nav .ptab { width: 46px; position: relative; margin-left: 3px; }
.ptab svg { position: absolute; left: 0; top: -1px; }
.ptab span { position: relative; white-space: nowrap; }
.sb { width: 13px; height: 13px; background: #f0f0f0; }
.track { flex: 1; background: #fff; display: flex; }
.track span { margin-left: 137px; width: 198px; height: 12px; background: #cacaca; }

.docker { width: 226px; flex: none; display: flex; flex-direction: column; }
.dhead { height: 16px; background: #e8e8e8; display: flex; align-items: center; padding: 1px 2px 0; }
.dhead span { margin-right: auto; color: #333; }
.dhead button { width: 14px; }
.dhead .ic { color: #9a9a9a; }
.dbody { flex: 1; display: flex; background: #fff; min-height: 0; }
.dcontent { width: 197px; padding-left: 7px; }
.group { width: 186px; border: 2px solid #8b96a1; border-radius: 8px; background: #fff; }
.group.first { height: 252px; border-top: 0; border-radius: 0 0 8px 8px; padding: 7px 4px 0; }
.ops { display: grid; grid-template-columns: repeat(4, 36px); gap: 4px 3px; padding-left: 2px; }
.ops button, .g12, .files button, .pbtns button { background: #d4d4d4; border-radius: 3px; }
.ops svg { display: block; }
.eng { font-size: 9px; fill: #bbb; }
.tp { display: flex; align-items: center; gap: 4px; margin: 11px 0 7px; height: 14px; }
.cb { position: relative; width: 13px; height: 13px; flex: none; display: block; }
.cb input { appearance: none; display: block; width: 13px; height: 13px; border: 1px solid #ccc; border-radius: 3px; background: #fff; }
.cb .ic { position: absolute; left: 1px; top: 1px; pointer-events: none; }
.list { height: 130px; border: 1px solid #777; border-radius: 3px; width: 174px; }
table { border-collapse: collapse; }
th, td { padding: 0; height: 18px; text-align: left; font-weight: 400; }
th { height: 16px; font-weight: 600; color: #222; }
th:first-child, td:first-child { width: 30px; padding-left: 5px; }
th:nth-child(2), td:nth-child(2) { width: 26px; }
.nc { margin-top: 9px; height: 258px; overflow: hidden; }
.nchead { width: 100%; height: 17px; background: #85929f; color: #fff; font-weight: 600; justify-content: flex-start; gap: 4px; padding-left: 1px; }
.ncbody { padding: 13px 4px 0; }
.g12 { width: 36px; height: 36px; color: #c8305c; font-weight: 700; font-size: 11px; line-height: 15px; margin-left: 2px; display: block; text-align: center; }
.files { display: flex; gap: 3px; margin: 9px 0 7px 2px; }
.files button { width: 24px; height: 24px; }
.preview { width: 174px; height: 144px; border: 1px solid #999; position: relative; }
.preview svg { display: block; }
.ax { font-size: 8px; font-weight: 600; fill: #333; }
.cube { font-size: 9px; font-weight: 700; fill: #e8e4ee; }
.cube.sm { font-size: 7px; }
.pbtns { position: absolute; right: 3px; top: 3px; display: flex; flex-direction: column; gap: 4px; }
.pbtns button { width: 18px; height: 18px; }
.pbtns .ic, .files .ic { color: #111; }
.days { margin: 2px 4px 0 0; text-align: center; }
.dscroll { width: 12px; display: flex; flex-direction: column; align-items: center; padding: 3px 1px 9px 0; }
.dscroll span { width: 8px; flex: 1; margin: 86px 0 0; background: #b0b0b0; }
.dscroll .ic { color: #888; }
.dtabs { width: 17px; background: #e9e9ee; border-left: 1px solid #a8ccf0; display: flex; flex-direction: column; }
.dtabs button { writing-mode: vertical-rl; width: 16px; background: #d8d8d8; justify-content: flex-start; gap: 4px; white-space: nowrap; }
.hints { height: 54px; padding-top: 3px; }
.props { height: 102px; padding-top: 2px; }
.manager { height: 98px; padding-top: 2px; }
.dtabs .act { height: 89px; background: #cce3fb; padding-top: 3px; }
.dtabs .plus { background: none; margin-top: 14px; }

.docpal { height: 17px; display: flex; align-items: center; border-top: 1px solid #dcdcdc; border-bottom: 1px solid #e0e0e0; }
.grip { width: 3px; height: 12px; border-left: 1px dotted #bbb; border-right: 1px dotted #bbb; margin-left: 3px; }
.docpal button { width: 15px; height: 14px; }
.docpal .sw { width: 14px; border-right: 1px solid #6666; }
.docpal .end { margin-left: auto; }
.docpal button:last-child { margin-right: 5px; }
.palette { width: 16px; flex: none; border-left: 1px solid #ddd; display: flex; flex-direction: column; }
.dots { height: 4px; margin: 2px 2px 0; border-top: 1px dotted #bbb; border-bottom: 1px dotted #bbb; }
.pa { height: 15px; width: 15px; }
.palette .sw { width: 14px; height: 14px; border-bottom: 1px solid #5556; border-right: 1px solid #5556; }

.status { height: 27px; display: flex; align-items: center; padding-left: 5px; }
.coords { width: 89px; white-space: nowrap; }
.fill { display: flex; align-items: center; gap: 2px; margin-left: auto; width: 165px; }
.outline { display: flex; align-items: center; gap: 4px; width: 185px; height: 18px; border-left: 1px solid #ddd; padding-left: 4px; white-space: nowrap; }
.outline b { width: 16px; height: 16px; background: #000; }
.taskbar { height: 26px; background: #101010; color: #fff; display: flex; }
.start { width: 29px; }
.tv { width: 31px; }
.appb { width: 31px; border-bottom: 3px solid transparent; padding-top: 2px; position: relative; }
.appb.run::after { content: ""; position: absolute; left: 4px; right: 3px; bottom: -3px; height: 3px; background: #dc9a72; }
.appb.act { background: #2e2e2e; }
.tray { margin-left: auto; display: flex; align-items: center; border-right: 1px solid #555; margin-right: 3px; }
.tray button { width: 20px; height: 26px; }
.tray .ink { width: 28px; }
.lang, .clock { font-size: 10px; width: 31px; text-align: center; }
.tray .notif { width: 41px; padding-right: 7px; }
</style>
